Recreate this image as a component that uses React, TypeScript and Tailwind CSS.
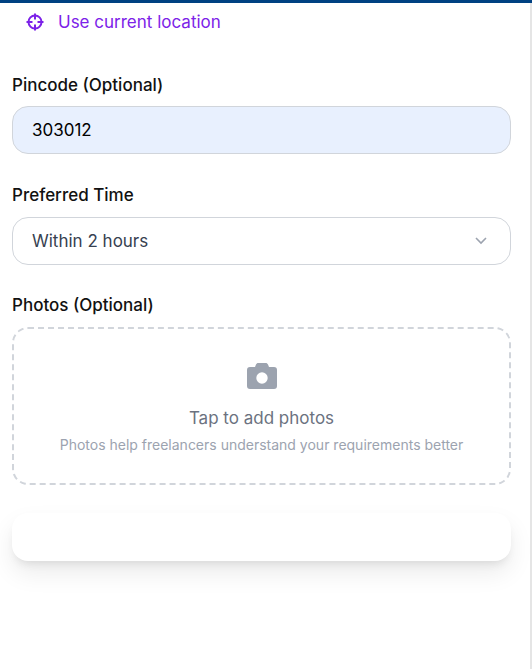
import React from "react";

function Crosshair() {
  return (
    <svg width="18" height="18" viewBox="0 0 18 18" fill="none" stroke="currentColor" strokeWidth="2" aria-hidden="true">
      <circle cx="9" cy="9" r="6.5" />
      <path d="M9 .5v6M9 11.5v6M.5 9h6M11.5 9h6" />
    </svg>
  );
}

function Camera() {
  return (
    <svg width="30" height="26" viewBox="0 0 30 26" fill="currentColor" className="text-[#9ca3af]" aria-hidden="true">
      <path fillRule="evenodd" d="M3 4h5l1-2.4C9.4.6 10.2 0 11.3 0h7.4c1.1 0 1.9.6 2.3 1.6L22 4h5a3 3 0 0 1 3 3v16a3 3 0 0 1-3 3H3a3 3 0 0 1-3-3V7a3 3 0 0 1 3-3Zm12 5.3a5.7 5.7 0 1 0 0 11.4 5.7 5.7 0 0 0 0-11.4Z" />
    </svg>
  );
}

export default function App() {
  return (
    <div className="min-h-screen border-t-3 border-[#004182] bg-white font-['Inter',sans-serif] text-[17px] leading-6 text-[#111111]">
      <form className="min-h-[calc(100vh-3px)] border-r-2 border-[#e5e5e5] pl-3 pr-[19px]">
        <button type="button" className="flex h-[38px] items-center gap-3.5 pl-3.5 text-[#7c22e8]">
          <Crosshair />
          Use current location
        </button>

        <div className="mt-8">
          <label htmlFor="pincode" className="block font-medium">Pincode (Optional)</label>
          <input id="pincode" type="text" inputMode="numeric" defaultValue="303012" className="mt-[9px] block h-12 w-full rounded-2xl border border-[#d1d5db] bg-[#e8f0fe] px-[19px] text-black" />
        </div>

        <div className="mt-[29px]">
          <label htmlFor="time" className="block font-medium">Preferred Time</label>
          <div className="relative mt-[10px]">
            <select id="time" className="block h-12 w-full appearance-none rounded-2xl border border-[#d1d5db] bg-white px-[19px] text-[#374151]">
              <option>Within 2 hours</option>
            </select>
            <svg width="12" height="8" viewBox="0 0 12 8" fill="none" stroke="#9ca3af" strokeWidth="1.6" className="pointer-events-none absolute inset-y-0 right-6 my-auto" aria-hidden="true">
              <path d="m1 1 5 5 5-5" />
            </svg>
          </div>
        </div>

        <div className="mt-7">
          <label htmlFor="photos" className="block font-medium">Photos (Optional)</label>
          <button id="photos" type="button" className="mt-[10px] flex h-[158px] w-full flex-col items-center justify-center rounded-2xl border-2 border-dashed border-[#d1d5db] pt-2">
            <Camera />
            <span className="mt-[17px] text-[#6b7280]">Tap to add photos</span>
            <span className="mt-[3px] text-sm leading-6 text-[#9ca3af]">Photos help freelancers understand your requirements better</span>
          </button>
        </div>

        <button type="submit" aria-label="Submit" className="mt-7 block h-12 w-full rounded-2xl bg-white shadow-[0_12px_24px_rgba(0,0,0,0.08),0_6px_10px_-4px_rgba(0,0,0,0.1)]" />
      </form>
    </div>
  );
}
